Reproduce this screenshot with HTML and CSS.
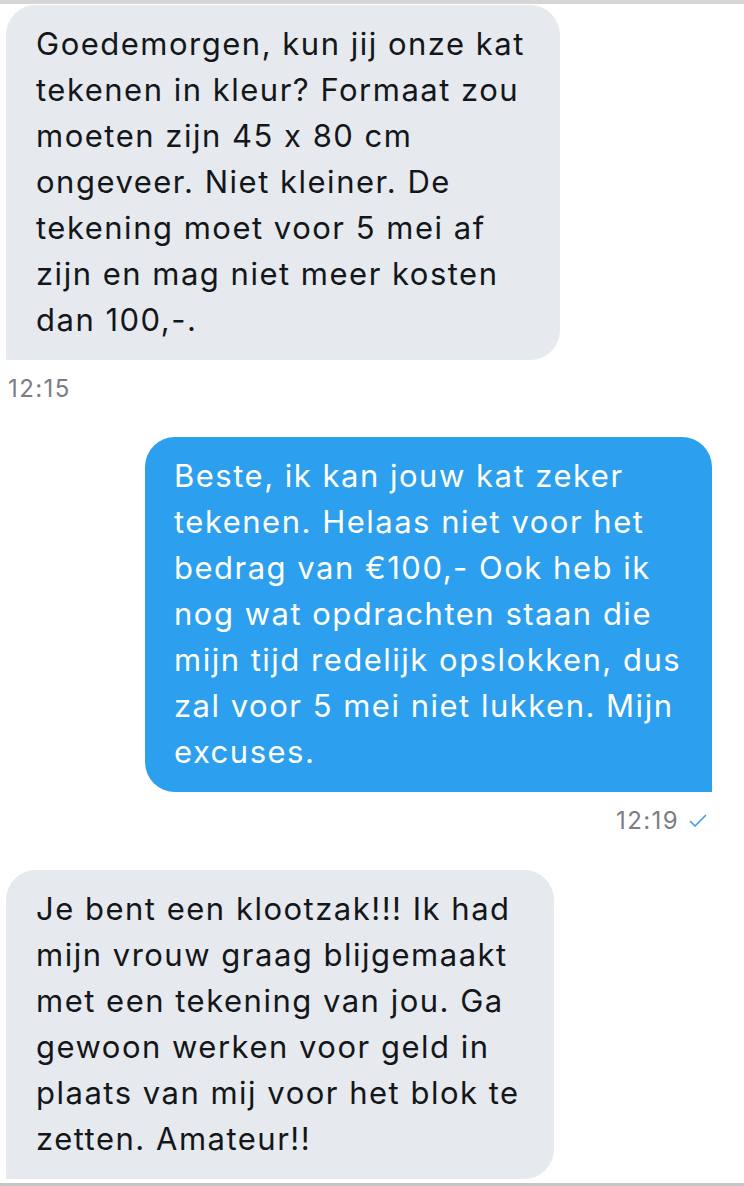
FILE: index.html
```html
<!DOCTYPE html>
<html lang="nl">
  <head>
    <meta charset="UTF-8" />
    <meta name="viewport" content="width=device-width, initial-scale=1.0" />
    <title>Berichten</title>
    <link rel="stylesheet" href="styles.css">
  </head>
  <body>
    <div class="thread">
      <!-- incoming -->
      <div class="bubble bubble-in msg-first">
        Goedemorgen, kun jij onze kat<br />
        tekenen in kleur? Formaat zou<br />
        moeten zijn 45 x 80 cm<br />
        ongeveer. Niet kleiner. De<br />
        tekening moet voor 5 mei af<br />
        zijn en mag niet meer kosten<br />
        dan 100,-.
      </div>
      <div class="time time-in">12:15</div>

      <!-- outgoing -->
      <div class="bubble bubble-out msg-reply">
        Beste, ik kan jouw kat zeker<br />
        tekenen. Helaas niet voor het<br />
        bedrag van €100,- Ook heb ik<br />
        nog wat opdrachten staan die<br />
        mijn tijd redelijk opslokken, dus<br />
        zal voor 5 mei niet lukken. Mijn<br />
        excuses.
      </div>
      <div class="time time-out">
        12:19
        <svg class="check" width="18" height="13" viewBox="0 0 18 13">
          <polyline points="1,7 6,12 17,1" fill="none" stroke="#3d9fe6" stroke-width="1.6" />
        </svg>
      </div>

      <!-- incoming -->
      <div class="bubble bubble-in msg-last">
        Je bent een klootzak!!! Ik had<br />
        mijn vrouw graag blijgemaakt<br />
        met een tekening van jou. Ga<br />
        gewoon werken voor geld in<br />
        plaats van mij voor het blok te<br />
        zetten. Amateur!!
      </div>
    </div>
  </body>
</html>
```

FILE: styles.css
```css
body {
  margin: 0;
  background-color: #fff;
  font-family: Inter, "Noto Sans", sans-serif;
  font-feature-settings: "calt" 0;
}

.thread {
  height: 1186px;
  box-sizing: border-box;
  border-top: 4px solid #d6d6d6;
  border-bottom: 3px solid #c6c6c6;
  padding-top: 1px;
  display: flex;
  flex-direction: column;
}

.bubble {
  box-sizing: border-box;
  padding: 16px 20px 17px 30px;
  font-size: 31px;
  line-height: 46px;
  letter-spacing: 1.5px;
  white-space: nowrap;
  border-radius: 30px;
}

.bubble-in {
  align-self: flex-start;
  margin-left: 6px;
  background-color: #e6e9ee;
  color: #14171a;
  border-bottom-left-radius: 0;
}

.bubble-out {
  align-self: flex-end;
  margin-right: 32px;
  margin-top: 34px;
  background-color: #2ca0ee;
  color: #fff;
  border-bottom-right-radius: 0;
}

.msg-first {
  width: 554px;
}

.msg-reply {
  width: 567px;
  padding-left: 29px;
}

.msg-last {
  width: 548px;
  margin-top: 35px;
}

.time {
  margin-top: 15px;
  font-size: 24px;
  line-height: 28px;
  letter-spacing: 1.4px;
  color: #7a7e84;
}

.time-in {
  align-self: flex-start;
  margin-left: 8px;
}

.time-out {
  align-self: flex-end;
  margin-right: 37px;
  display: flex;
  align-items: center;
  gap: 10px;
}

.check {
  margin-top: -1px;
}
```
